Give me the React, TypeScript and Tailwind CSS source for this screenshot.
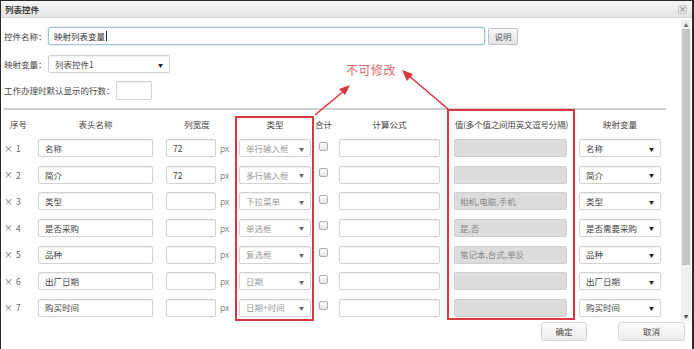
import React from "react";

const FONT = { fontFamily: '"Noto Sans CJK SC", "Noto Sans", sans-serif' };

const rows = [
  { no: 1, name: "名称", width: "72", type: "单行输入框", value: "", map: "名称" },
  { no: 2, name: "简介", width: "72", type: "多行输入框", value: "", map: "简介" },
  { no: 3, name: "类型", width: "", type: "下拉菜单", value: "相机,电脑,手机", map: "类型" },
  { no: 4, name: "是否采购", width: "", type: "单选框", value: "是,否", map: "是否需要采购" },
  { no: 5, name: "品种", width: "", type: "复选框", value: "笔记本,台式,单反", map: "品种" },
  { no: 6, name: "出厂日期", width: "", type: "日期", value: "", map: "出厂日期" },
  { no: 7, name: "购买时间", width: "", type: "日期+时间", value: "", map: "购买时间" },
];

// base field look, text colour given separately
const fieldCls =
  "h-[18px] border border-[#d2d2d2] rounded-[2px] bg-white shadow-[inset_0_1px_1px_rgba(0,0,0,0.06)] flex items-center px-[6px]";
const inputCls = `${fieldCls} text-[#444]`;

function Arrow() {
  return <span className="text-[5px] text-[#222] leading-none">▼</span>;
}

export default function App() {
  return (
    <div
      style={FONT}
      className="relative w-[694px] h-[349px] overflow-hidden bg-white border-t border-l border-r-2 border-[#2a2a2a] text-[8.5px] text-[#444] leading-none"
    >
      {/* title bar */}
      <div className="h-[17px] bg-gradient-to-b from-[#f6f6f6] to-[#e4e4e4] border-b border-[#d6d6d6] flex items-center justify-between pl-[4px] pr-[5px]">
        <span className="font-bold text-[8.5px] text-[#3a3a3a]">列表控件</span>
        <span className="w-[9px] h-[9px] flex items-center justify-center text-[8px] text-[#666] bg-[#e9e9e9] border border-[#c9c9c9] rounded-[1px]">×</span>
      </div>

      <div className="flex h-[303px]">
        {/* main */}
        <div className="flex-1 flex flex-col">
          <div className="flex items-center pl-[3px] mt-[9px] h-[18px]">
            <span className="w-[44px]">控件名称：</span>
            <div className="w-[437px] h-[18px] border border-[#9cc2d6] rounded-[2px] flex items-center px-[5px] text-[#333] shadow-[0_0_2px_rgba(120,170,200,0.5)]">
              映射列表变量<span className="w-px h-[10px] bg-[#222] ml-px" />
            </div>
            <div className="ml-[3px] w-[30px] h-[17px] border border-[#c4c4c4] rounded-[2px] bg-gradient-to-b from-[#fafafa] to-[#e2e2e2] flex items-center justify-center text-[#555]">
              说明
            </div>
          </div>

          <div className="flex items-center pl-[3px] mt-[10px] h-[18px]">
            <span className="w-[44px]">映射变量：</span>
            <div className={`${inputCls} w-[122px] justify-between`}>
              <span>列表控件1</span>
              <Arrow />
            </div>
          </div>

          <div className="flex items-center pl-[3px] mt-[8px] h-[19px]">
            <span className="w-[112px]">工作办理时默认显示的行数：</span>
            <div className={`${inputCls} w-[36px] h-[19px]`} />
          </div>

          <div className="mt-[8px] ml-[3px] w-[662px] border-t-2 border-[#d0d0d0]" />

          {/* header */}
          <div className="flex items-center h-[27px] mt-[-2px] pt-[5px]">
            <span className="w-[37px] text-center pr-[2px]">序号</span>
            <span className="w-[115px] text-center">表头名称</span>
            <span className="w-[13px]" />
            <span className="w-[62px] text-center">列宽度</span>
            <span className="w-[8px]" />
            <span className="w-[78px] text-center">类型</span>
            <span className="w-[25px] pl-[1px]">合计</span>
            <span className="w-[101px] text-center">计算公式</span>
            <span className="w-[9px]" />
            <span className="w-[125px] text-center tracking-[-0.2px]">值(多个值之间用英文逗号分隔)</span>
            <span className="w-[5px]" />
            <span className="w-[82px] text-center">映射变量</span>
          </div>

          {rows.map((r) => (
            <div key={r.no} className="flex items-center h-[26.67px]">
              <span className="w-[13px] pl-[3px] text-[#666] text-[9px]">×</span>
              <span className="w-[24px] pl-[2px] text-[#666]">{r.no}</span>
              <div className={`${inputCls} w-[115px]`}>{r.name}</div>
              <span className="w-[13px]" />
              <div className={`${inputCls} w-[50px]`}>{r.width}</div>
              <span className="w-[20px] pl-[4px] text-[#888]">px</span>
              <div className="w-[78px] px-[3px]">
                <div className={`${fieldCls} justify-between text-[#9a9a9a]`}>
                  <span>{r.type}</span>
                  <span className="text-[5px] text-[#666]">▼</span>
                </div>
              </div>
              <div className="w-[25px] pl-[5px] pb-[4px]">
                <div className="w-[9px] h-[9px] border border-[#aeaeae] rounded-[2px] bg-gradient-to-b from-[#fdfdfd] to-[#e4e4e4]" />
              </div>
              <div className={`${inputCls} w-[101px]`} />
              <span className="w-[9px]" />
              <div className="w-[125px] px-[5px]">
                <div className="h-[18px] w-[113px] border border-[#cfcfcf] rounded-[2px] bg-[#dcdcdc] flex items-center px-[5px] text-[#888]">
                  {r.value}
                </div>
              </div>
              <span className="w-[5px]" />
              <div className={`${inputCls} w-[82px] justify-between`}>
                <span>{r.map}</span>
                <Arrow />
              </div>
            </div>
          ))}
        </div>

        {/* scrollbar */}
        <div className="w-[10px] mr-[1px] mt-[2px] bg-[#f1f1f1] flex flex-col items-center">
          <span className="text-[5px] text-[#777] h-[8px] pt-[2px]">▲</span>
          <div className="w-[8px] h-[236px] bg-[#c6c6c6] mt-[1px]" />
          <div className="flex-1" />
          <span className="text-[5px] text-[#555] h-[8px]">▼</span>
        </div>
      </div>

      {/* footer buttons */}
      <div className="flex justify-end gap-[31px] pr-[7px] mt-[1px]">
        <div className="w-[46px] h-[19px] border border-[#d6d6d6] rounded-[3px] bg-gradient-to-b from-[#fbfbfb] to-[#ececec] flex items-center justify-center text-[#444]">确定</div>
        <div className="w-[67px] h-[19px] border border-[#d6d6d6] rounded-[3px] bg-gradient-to-b from-[#fbfbfb] to-[#ececec] flex items-center justify-center text-[#444]">取消</div>
      </div>

      {/* annotation: red boxes, label and arrows */}
      <div className="absolute left-[234px] top-[115px] w-[79px] h-[205px] border-2 border-[#d9383f]" />
      <div className="absolute left-[446px] top-[108px] w-[128px] h-[211px] border-2 border-[#d9383f]" />
      <span className="absolute left-[345px] top-[63px] text-[12px] text-[#e06a6e] tracking-[0.5px]">不可修改</span>
      <svg className="absolute left-0 top-0" width="694" height="349" viewBox="0 0 694 349">
        <g stroke="#d9383f" strokeWidth="1.6" fill="#d9383f">
          <line x1="314" y1="114" x2="344" y2="89" />
          <polygon points="349,84 338,88 344,94" stroke="none" />
          <line x1="447" y1="108" x2="407" y2="74" />
          <polygon points="401,69 406,80 412,73" stroke="none" />
        </g>
      </svg>
    </div>
  );
}
